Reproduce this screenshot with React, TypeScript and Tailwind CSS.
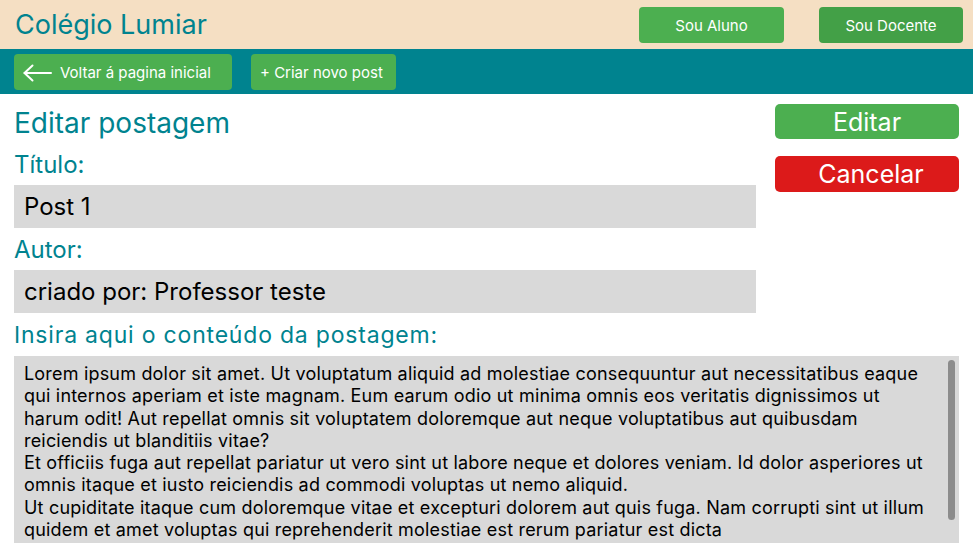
import React from "react";

const lines1 = [
  "Lorem ipsum dolor sit amet. Ut voluptatum aliquid ad molestiae consequuntur aut necessitatibus eaque",
  "qui internos aperiam et iste magnam. Eum earum odio ut minima omnis eos veritatis dignissimos ut",
  "harum odit! Aut repellat omnis sit voluptatem doloremque aut neque voluptatibus aut quibusdam",
  "reiciendis ut blanditiis vitae?",
  "Et officiis fuga aut repellat pariatur ut vero sint ut labore neque et dolores veniam. Id dolor asperiores ut",
  "omnis itaque et iusto reiciendis ad commodi voluptas ut nemo aliquid.",
  "Ut cupiditate itaque cum doloremque vitae et excepturi dolorem aut quis fuga. Nam corrupti sint ut illum",
  "quidem et amet voluptas qui reprehenderit molestiae est rerum pariatur est dicta",
];

export default function App() {
  return (
    <div className="w-[973px] h-[545px] overflow-hidden bg-white" style={{ fontFamily: "Inter, 'Noto Sans', sans-serif" }}>
      <header className="h-[49px] bg-[#f5dfc3] flex items-center justify-between pl-[14px] pr-[10px]">
        <h1 className="text-[27px] leading-[33px] text-[#00838f] pl-[1px]">Colégio Lumiar</h1>
        <div className="flex gap-[35px] pt-[1px]">
          <button className="w-[145px] h-[36px] rounded-[4px] bg-[#4caf50] text-white text-[15px] pt-[2px]">Sou Aluno</button>
          <button className="w-[144px] h-[36px] rounded-[4px] bg-[#43a047] text-white text-[15px] pt-[2px]">Sou Docente</button>
        </div>
      </header>
      <nav className="h-[45px] bg-[#00838f] flex items-center px-[14px] gap-[19px] pt-[1px]">
        <button className="w-[218px] h-[36px] rounded-[4px] bg-[#4caf50] text-white text-[15px] flex items-center pl-[9px] gap-[8px] pt-[2px]">
          <svg width="29" height="18" viewBox="0 0 29 18" fill="none" stroke="white" strokeWidth="2" strokeLinecap="round" strokeLinejoin="round">
            <path d="M28 9H1.5" />
            <path d="M9.5 1.5L1.5 9l8 7.5" />
          </svg>
          <span>Voltar á pagina inicial</span>
        </button>
        <button className="w-[145px] h-[36px] rounded-[4px] bg-[#4caf50] text-white text-[15px] flex items-center pl-[9px] pt-[2px]">
          + Criar novo post
        </button>
      </nav>
      <main className="px-[14px]">
        <div className="flex gap-[19px]">
          <div className="flex-1 flex flex-col">
            <h2 className="mt-[12px] text-[28px] leading-[34px] text-[#00838f]">Editar postagem</h2>
            <label className="mt-[10px] text-[24px] leading-[29px] text-[#00838f]">Título:</label>
            <div className="mt-[6px] h-[43px] bg-[#d9d9d9] flex items-center pl-[10px] text-[24px] text-black">Post 1</div>
            <label className="mt-[7px] text-[24px] leading-[29px] text-[#00838f]">Autor:</label>
            <div className="mt-[6px] h-[43px] bg-[#d9d9d9] flex items-center pl-[10px] text-[24px] text-black">criado por: Professor teste</div>
          </div>
          <div className="w-[184px] flex flex-col">
            <button className="mt-[10px] h-[35px] rounded-[5px] bg-[#4caf50] text-white text-[25px] leading-[30px]">Editar</button>
            <button className="mt-[17px] h-[36px] rounded-[5px] bg-[#dc1a1a] text-white text-[25px] leading-[30px] pl-[8px]">Cancelar</button>
          </div>
        </div>
        <label className="block mt-[8px] text-[23px] leading-[28px] tracking-[0.8px] text-[#00838f]">Insira aqui o conteúdo da postagem:</label>
        <div className="relative mt-[7px] h-[187px] bg-[#d9d9d9] pl-[10px] pt-[7px] overflow-hidden">
          {lines1.map((l, i) => (
            <div key={i} className="text-[18px] leading-[22.3px] tracking-[0.19px] text-black whitespace-nowrap">{l}</div>
          ))}
          <div className="absolute right-[4px] top-[4px] w-[7px] h-[160px] rounded-full bg-[#8c8c8c]" />
        </div>
      </main>
    </div>
  );
}
